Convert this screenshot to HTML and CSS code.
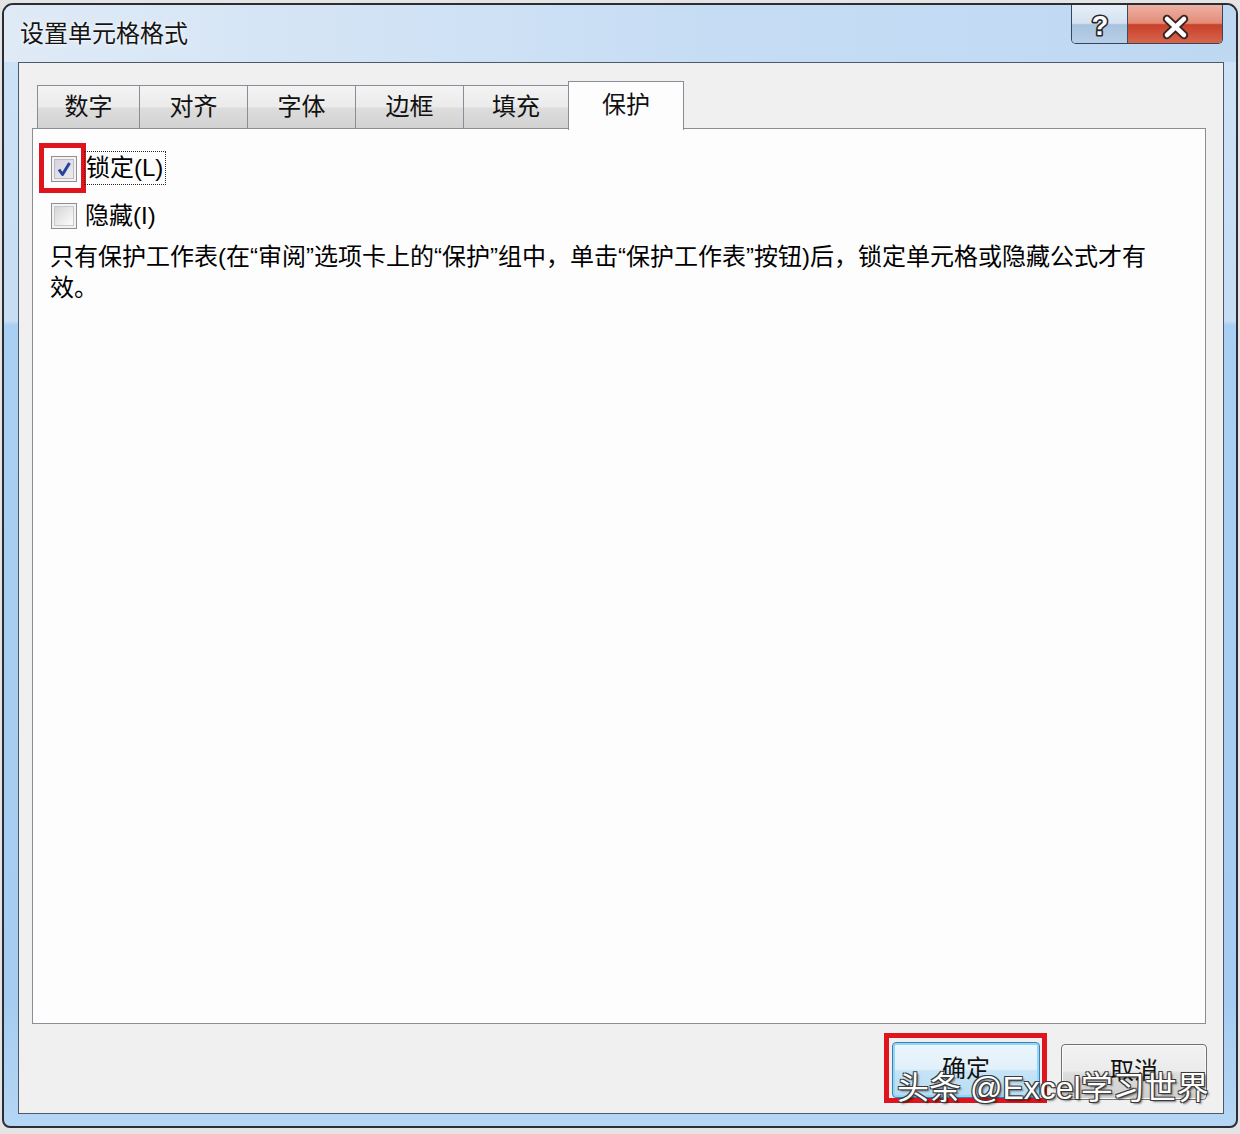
FILE: index.html
```html
<!DOCTYPE html>
<html lang="zh-CN">
<head>
<meta charset="utf-8">
<title>设置单元格格式</title>
<link rel="stylesheet" href="styles.css">
</head>
<body>
<div class="window">
  <div class="titlebar">
    <div class="title">设置单元格格式</div>
    <div class="caption-btns">
      <div class="cap-btn cap-help">
        <svg width="55" height="38" viewBox="0 0 55 38"><text x="28" y="30" text-anchor="middle" font-family="Liberation Sans, sans-serif" font-weight="bold" font-size="27" fill="#ffffff" stroke="#262626" stroke-width="3.2" stroke-linejoin="round" paint-order="stroke">?</text></svg>
      </div>
      <div class="cap-btn cap-close">
        <svg width="94" height="38" viewBox="0 0 94 38"><path d="M39 14 L56 30 M56 14 L39 30" stroke="#3a2522" stroke-width="8.5" stroke-linecap="round" fill="none"/><path d="M39 14 L56 30 M56 14 L39 30" stroke="#ffffff" stroke-width="4.5" stroke-linecap="round" fill="none"/></svg>
      </div>
    </div>
  </div>
  <div class="client">
    <div class="tabs">
      <div class="tab tab-first">数字</div>
      <div class="tab">对齐</div>
      <div class="tab">字体</div>
      <div class="tab">边框</div>
      <div class="tab tab-narrow">填充</div>
      <div class="tab tab-active">保护</div>
    </div>
    <div class="panel">
      <div class="check-row row-locked">
        <span class="mark-box"><span class="checkbox checked"><svg width="24" height="24" viewBox="0 0 24 24"><path d="M7 12.5 L10.5 17.5 L17.5 6" stroke="#23449a" stroke-width="3" fill="none" stroke-linejoin="round"/></svg></span></span>
        <span class="label focus">锁定(L)</span>
      </div>
      <div class="check-row row-hidden">
        <span class="checkbox"></span>
        <span class="label">隐藏(I)</span>
      </div>
      <p class="desc">只有保护工作表(在“审阅”选项卡上的“保护”组中，单击“保护工作表”按钮)后，锁定单元格或隐藏公式才有<br>效。</p>
    </div>
    <div class="actions">
      <span class="mark-box btn-mark"><span class="btn btn-default">确定</span></span>
      <span class="btn btn-cancel">取消</span>
    </div>
  </div>
  <div class="watermark">头条 @Excel学习世界</div>
</div>
</body>
</html>
```
FILE: styles.css
```css
html, body {
  margin: 0;
  padding: 0;
}
body {
  background: #e4e4e4;
  width: 1240px;
  height: 1134px;
  overflow: hidden;
  font-family: "Liberation Sans", "Noto Sans CJK SC", sans-serif;
  color: #000;
}
.window {
  position: relative;
  box-sizing: border-box;
  margin: 3px 0 0 2px;
  width: 1236px;
  height: 1125px;
  border: 2px solid #2a2e34;
  border-radius: 11px 11px 8px 8px;
  background: linear-gradient(to bottom, #cfe2f6 0, #c6ddf4 316px, #a9cff2 320px, #a6cdf1 1000px, #b5d6f4 100%);
  display: flex;
  flex-direction: column;
}
.titlebar {
  height: 57px;
  display: flex;
  align-items: flex-start;
  border-radius: 9px 9px 0 0;
  background: linear-gradient(to right, #dfeaf6 0, #d2e3f5 30%, #c5dcf4 60%, #bfd8f2 100%);
}
.title {
  align-self: center;
  margin-left: 16px;
  font-size: 24px;
  line-height: 30px;
  color: #151515;
  text-shadow: 0 0 6px rgba(255,255,255,0.9), 0 0 2px rgba(255,255,255,0.9);
}
.caption-btns {
  margin-left: auto;
  margin-right: 13px;
  display: flex;
  border: 1px solid #35455a;
  border-top: none;
  border-radius: 0 0 5px 5px;
  overflow: hidden;
}
.cap-btn {
  height: 38px;
}
.cap-btn svg {
  display: block;
}
.cap-help {
  width: 55px;
  border-right: 1px solid #3b4a5e;
  background: linear-gradient(to bottom, #e6eef8 0, #d5e2f1 48%, #a8c2de 52%, #b9cfe7 100%);
}
.cap-close {
  width: 94px;
  background: linear-gradient(to bottom, #eeb1a4 0, #e38c78 48%, #c8402a 52%, #d7654c 100%);
}
.client {
  flex: 1;
  margin: 0 12px 12px 14px;
  border: 1px solid #4d5966;
  background: #f0f0f0;
  padding: 18px 17px 0 13px;
  display: flex;
  flex-direction: column;
}
.tabs {
  display: flex;
  align-items: flex-end;
  padding-left: 5px;
  height: 47px;
}
.tab {
  box-sizing: border-box;
  width: 109px;
  height: 43px;
  margin-left: -1px;
  border: 1px solid #8a8d95;
  border-bottom: none;
  background: linear-gradient(to bottom, #f3f3f3 0, #ebebeb 50%, #dddddd 52%, #d2d2d2 100%);
  font-size: 24px;
  line-height: 42px;
  text-align: center;
  color: #111;
}
.tab-first {
  width: 103px;
  margin-left: 0;
}
.tab-narrow {
  width: 106px;
}
.tab-active {
  position: relative;
  z-index: 1;
  width: 116px;
  height: 49px;
  margin-bottom: -2px;
  background: #fdfdfd;
  line-height: 46px;
}
.panel {
  height: 896px;
  box-sizing: border-box;
  border: 1px solid #8a8d95;
  background: #fdfdfd;
  padding-top: 14px;
}
.check-row {
  display: flex;
  align-items: center;
}
.mark-box {
  display: inline-flex;
  border: 5px solid #e0141d;
}
.row-locked .mark-box {
  margin-left: 6px;
  padding: 8px 4px 6px 7px;
}
.checkbox {
  box-sizing: border-box;
  display: block;
  width: 26px;
  height: 26px;
  border: 1px solid #8e8f8f;
  background: linear-gradient(135deg, #cdcdcd 0, #e4e4e4 40%, #f6f6f6 75%, #ffffff 100%);
  box-shadow: inset 0 0 0 2px #f2f2f2, inset 0 0 0 3px #c9c9c9;
}
.checkbox.checked {
  background: linear-gradient(135deg, #d2cfd9 0, #e2dfe8 50%, #f1eff4 100%);
  box-shadow: inset 0 0 0 2px #f2f2f2, inset 0 0 0 3px #bdbbc7;
}
.checkbox svg {
  display: block;
}
.label {
  font-size: 24px;
  line-height: 26px;
}
.focus {
  margin-left: -2px;
  border: 1px dotted #2a2a2a;
  padding: 3px 2px 3px 1px;
}
.row-hidden {
  margin-top: 10px;
}
.row-hidden .checkbox {
  margin-left: 18px;
}
.row-hidden .label {
  margin-left: 8px;
}
.desc {
  margin: 12px 0 0 17px;
  font-size: 24px;
  line-height: 31px;
}
.actions {
  display: flex;
  justify-content: flex-end;
  align-items: flex-start;
  gap: 14px;
  padding-top: 9px;
  margin-right: -1px;
}
.btn-mark {
  padding: 4px 2px 0 3px;
}
.btn {
  box-sizing: border-box;
  display: block;
  height: 56px;
  font-size: 24px;
  line-height: 52px;
  text-align: center;
  color: #111;
  border-radius: 4px;
}
.btn-default {
  width: 148px;
  border: 1px solid #3c7fb1;
  box-shadow: inset 0 0 0 2px #93d6f6;
  background: linear-gradient(to bottom, #ecf6fc 0, #e1f0fa 48%, #c6e4f6 52%, #b7dcf3 100%);
}
.btn-cancel {
  width: 146px;
  margin-top: 11px;
  border: 1px solid #707070;
  box-shadow: inset 0 0 0 1px #fbfbfb;
  background: linear-gradient(to bottom, #f2f2f2 0, #ebebeb 48%, #dddddd 52%, #cfcfcf 100%);
}
.watermark {
  position: absolute;
  left: 893px;
  top: 1065px;
  font-family: "Liberation Sans", "Noto Sans CJK SC", sans-serif;
  font-size: 32px;
  line-height: 36px;
  color: #ffffff;
  white-space: nowrap;
  text-shadow: 1px 1px 0 #3a3a3a, -1px -1px 0 #3a3a3a, 1px -1px 0 #3a3a3a, -1px 1px 0 #3a3a3a, 2px 2px 2px rgba(0,0,0,0.5);
}
```
